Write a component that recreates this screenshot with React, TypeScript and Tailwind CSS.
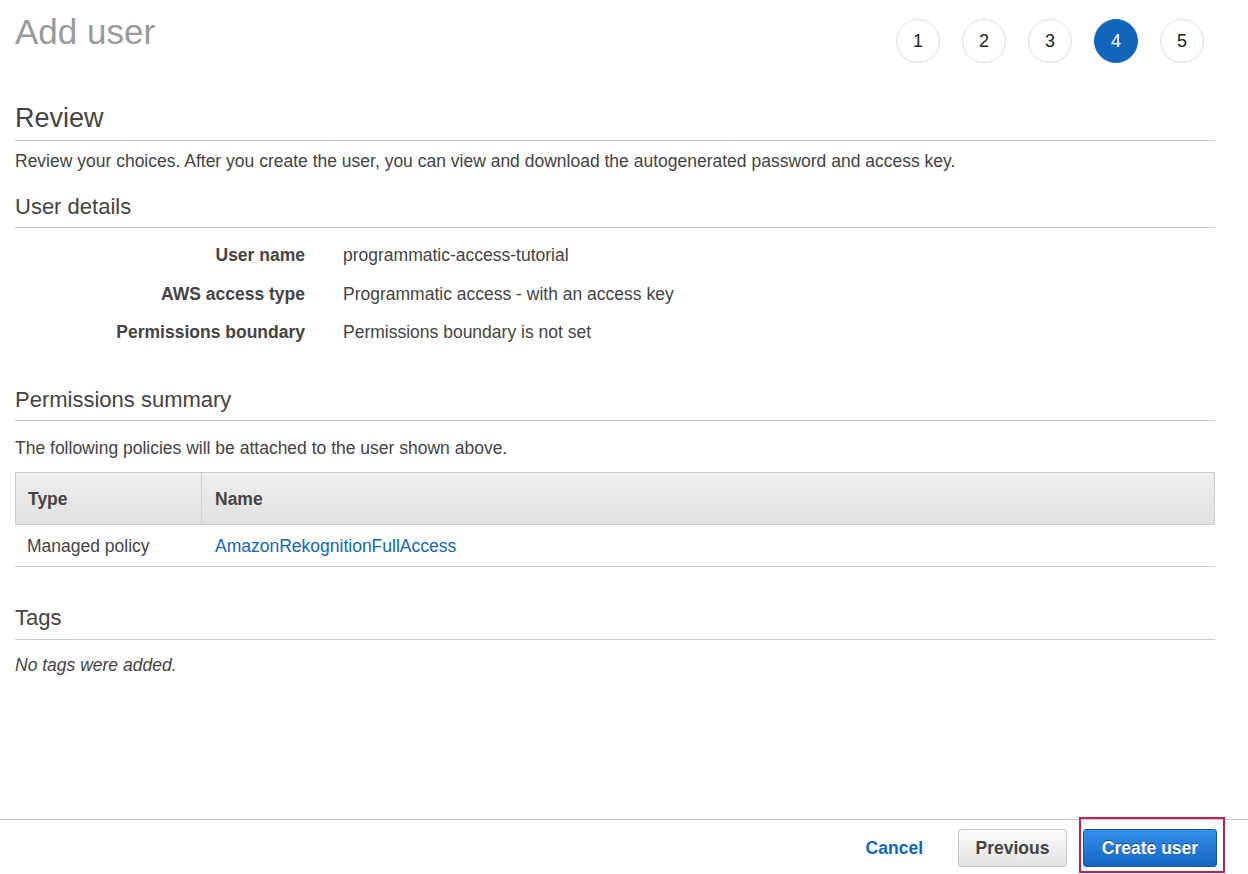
import React from "react";

const font = { fontFamily: '"Liberation Sans", Arial, Helvetica, sans-serif' };

function Step({ n, active }: { n: number; active?: boolean }) {
  return (
    <div
      className={
        active
          ? "w-[44px] h-[44px] rounded-full bg-[#1166bb] border border-[#1166bb] flex items-center justify-center text-white text-[18px]"
          : "w-[44px] h-[44px] rounded-full bg-white border border-[#dddddd] flex items-center justify-center text-[#222222] text-[18px]"
      }
    >
      {n}
    </div>
  );
}

function SectionTitle({ children, big }: { children: React.ReactNode; big?: boolean }) {
  return (
    <h2
      className={
        big
          ? "text-[27px] leading-[32px] text-[#444444] pt-[1px] pb-[6px] border-b border-[#cccccc]"
          : "text-[22px] leading-[28px] text-[#444444] pt-[1px] pb-[6px] border-b border-[#cccccc]"
      }
    >
      {children}
    </h2>
  );
}

export default function App() {
  const rows: [string, string][] = [
    ["User name", "programmatic-access-tutorial"],
    ["AWS access type", "Programmatic access - with an access key"],
    ["Permissions boundary", "Permissions boundary is not set"],
  ];
  return (
    <div style={font} className="w-[1248px] h-[874px] bg-white flex flex-col text-[#444444] text-[17.5px] overflow-hidden">
      <div className="flex-1 pl-[15px] pr-[33px]">
        {/* header */}
        <div className="flex justify-between items-start pt-[12px]">
          <h1 className="text-[35px] leading-[40px] text-[#9a9a9a]">Add user</h1>
          <div className="flex gap-[22px] mt-[7px] mr-[11px]">
            <Step n={1} />
            <Step n={2} />
            <Step n={3} />
            <Step n={4} active />
            <Step n={5} />
          </div>
        </div>

        <div className="mt-[38px]">
          <SectionTitle big>Review</SectionTitle>
        </div>
        <p className="mt-[8px] leading-[24px]">
          Review your choices. After you create the user, you can view and download the autogenerated password and access key.
        </p>

        <div className="mt-[19px]">
          <SectionTitle>User details</SectionTitle>
        </div>
        <div className="mt-[15px] grid grid-cols-[290px_1fr] gap-x-[38px] gap-y-[14.5px]">
          {rows.map(([k, v]) => (
            <React.Fragment key={k}>
              <div className="text-right font-bold leading-[24px]">{k}</div>
              <div className="leading-[24px]">{v}</div>
            </React.Fragment>
          ))}
        </div>

        <div className="mt-[41px]">
          <SectionTitle>Permissions summary</SectionTitle>
        </div>
        <p className="mt-[15px] leading-[24px]">The following policies will be attached to the user shown above.</p>

        <div className="mt-[12px]">
          <div className="flex h-[53px] border border-[#cccccc] bg-gradient-to-b from-[#efefef] to-[#e1e1e1]">
            <div className="w-[186px] flex items-center pl-[12px] pt-[2px] font-bold border-r border-[#d3d3d3]">Type</div>
            <div className="flex-1 flex items-center pl-[13px] pt-[2px] font-bold">Name</div>
          </div>
          <div className="flex h-[42px] border-b border-[#cccccc]">
            <div className="w-[187px] flex items-center pl-[12px] pt-[1px]">Managed policy</div>
            <div className="flex-1 flex items-center pl-[13px] pt-[1px]">
              <a className="text-[#1166bb]" href="#">AmazonRekognitionFullAccess</a>
            </div>
          </div>
        </div>

        <div className="mt-[36px]">
          <h2 className="text-[22px] leading-[28px] text-[#444444] pt-[1px] pb-[7px] border-b border-[#cccccc]">Tags</h2>
        </div>
        <p className="mt-[13px] leading-[24px] italic">No tags were added.</p>
      </div>

      {/* footer */}
      <div className="h-[55px] border-t border-[#cccccc] flex items-start justify-end pt-[9px] pr-[31px]">
        <div className="flex items-center h-[38px]">
          <a href="#" className="text-[#1166bb] font-bold mr-[35px]">Cancel</a>
          <button className="w-[109px] h-[38px] rounded-[3px] border border-[#c6c6c6] bg-gradient-to-b from-[#fbfbfb] to-[#e3e3e3] text-[#444444] font-bold text-[17.5px]">
            Previous
          </button>
          <div className="relative ml-[16px]">
            <button className="w-[134px] h-[38px] rounded-[3px] border border-[#1359a8] bg-gradient-to-b from-[#3391ea] to-[#1564c2] text-white font-bold text-[17.5px] [text-shadow:0_-1px_0_rgba(0,0,0,0.45)]">
              Create user
            </button>
            <span className="absolute -top-[12px] -bottom-[6px] -left-[4px] -right-[8px] border-2 border-[#c0214b] pointer-events-none" />
          </div>
        </div>
      </div>
    </div>
  );
}
